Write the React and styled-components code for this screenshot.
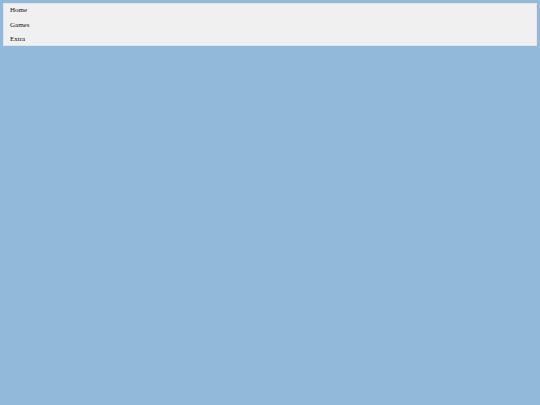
import React from 'react';
import styled, { createGlobalStyle } from 'styled-components';

const GlobalStyle = createGlobalStyle`
  html, body {
    margin: 0;
    padding: 0;
    background-color: #92b8da;
    font-family: "Liberation Serif", "Times New Roman", serif;
  }
`;

const Page = styled.div`
  width: 540px;
  height: 405px;
  padding: 3px;
  box-sizing: border-box;
`;

const Menu = styled.ul`
  list-style: none;
  margin: 0;
  padding: 0;
  background-color: #f0f0f0;
  border: 1px solid #dde6ef;
  height: 43px;
  box-sizing: border-box;
`;

const MenuItem = styled.li`
  font-size: 7px;
  color: #111;
  height: 14.5px;
  line-height: 12px;
  padding-left: 6px;
`;

const App = () => {
  const items = ['Home', 'Games', 'Extra'];

  return (
    <>
      <GlobalStyle />
      <Page>
        <Menu>
          {items.map((item) => (
            <MenuItem key={item}>{item}</MenuItem>
          ))}
        </Menu>
      </Page>
    </>
  );
};

export default App;
